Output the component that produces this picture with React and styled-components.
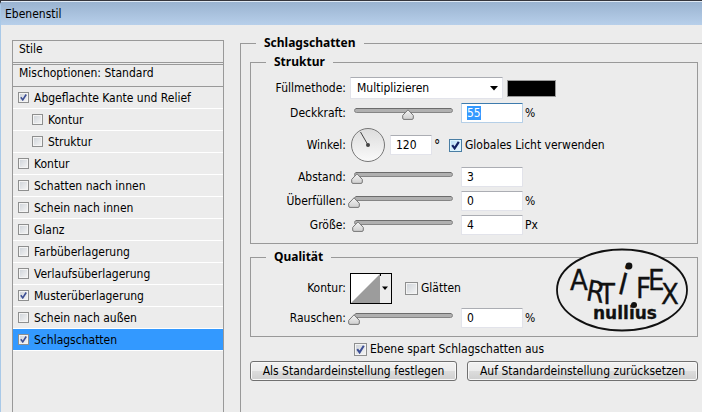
import React, { useEffect, useRef, useState } from "react";
import styled, { createGlobalStyle, css } from "styled-components";

const line = "#999";
const face = "#ececec";

const svgUrl = (markup) => `url("data:image/svg+xml,${encodeURIComponent(markup)}")`;

const tick = svgUrl(
  `<svg xmlns="http://www.w3.org/2000/svg" viewBox="0 0 11 11"><path d="M2.2 5.2 L4.6 8.4 L8.8 1.8" fill="none" stroke="#3d4f94" stroke-width="2"/></svg>`
);
const darkTick = svgUrl(
  `<svg xmlns="http://www.w3.org/2000/svg" viewBox="0 0 11 11"><path d="M2.2 5.2 L4.6 8.4 L8.8 1.8" fill="none" stroke="#122161" stroke-width="2.2"/></svg>`
);
const arrow = svgUrl(
  `<svg xmlns="http://www.w3.org/2000/svg" width="8" height="5" viewBox="0 0 8 5"><path d="M0 0H8L4 4.5Z" fill="#000"/></svg>`
);
const groove = svgUrl(
  `<svg xmlns="http://www.w3.org/2000/svg" width="99" height="5" viewBox="0 0 99 5"><rect x=".5" y=".5" width="98" height="4" rx="2" fill="#b0b0b0" stroke="#858585"/><path d="M2 .5H97" stroke="#6c6c6c"/></svg>`
);
const thumb = svgUrl(
  `<svg xmlns="http://www.w3.org/2000/svg" width="12" height="11" viewBox="0 0 12 11"><defs><linearGradient id="g" x1="0" y1="0" x2="0" y2="1"><stop offset="0" stop-color="#f4f4f4"/><stop offset="1" stop-color="#cfcfcf"/></linearGradient></defs><path d="M6 .8 L11.3 6.4 V9 Q11.3 10.4 10 10.4 H2 Q.7 10.4 .7 9 V6.4 Z" fill="url(#g)" stroke="#767676"/></svg>`
);

const GlobalStyle = createGlobalStyle`
  *, *::before, *::after { box-sizing: border-box; }
  body {
    margin: 0;
    overflow: hidden;
    background: #2b2b30;
    color: #000;
    font: 12px/16px Tahoma, "DejaVu Sans Condensed", "Noto Sans", sans-serif;
  }
  input, select, button { font: inherit; color: inherit; margin: 0; }
`;

const Dialog = styled.div`
  display: flex;
  flex-direction: column;
  min-height: 100vh;
  border-left: 1px solid #a9c9e8;
  background: ${face};
  border-top-left-radius: 5px;
`;

const TitleBar = styled.header`
  height: 25px;
  padding: 5px 4px 0;
  border-top: 1px solid #35353c;
  background: linear-gradient(#dfe9f4 0, #dfe9f4 1px, #9ab3d0 1px, #b7cfea 100%);
`;

const Title = styled.h1`
  margin: 0;
  font-size: 12px;
  line-height: 17px;
  font-weight: 400;
`;

const Body = styled.div`
  flex: 1;
  display: flex;
  gap: 16px;
  padding: 10px 0 0 11px;
`;

const Sidebar = styled.nav`
  flex: 0 0 212px;
  margin-top: 5px;
  border: 1px solid ${line};
  border-bottom: 0;
`;

const SideHead = styled.div`
  height: ${(p) => (p.$double ? 24 : 22)}px;
  padding: 0 6px;
  border-bottom: ${(p) => (p.$double ? "3px double" : "1px solid")} ${line};
`;

const StyleList = styled.ul`
  margin: 0;
  padding: 0;
  list-style: none;
`;

const StyleRow = styled.li`
  height: 22px;
  padding-left: ${(p) => (p.$nested ? 19 : 5)}px;
  border-bottom: 1px solid #fff;
  background: ${(p) => (p.$selected ? "#3399ff" : "transparent")};
`;

const CheckLabel = styled.label`
  display: flex;
  align-items: center;
  gap: 3px;
  white-space: nowrap;
`;

const SideLabel = styled(CheckLabel)`
  height: 21px;
  gap: 5px;
`;

const Check = styled.input.attrs({ type: "checkbox" })`
  appearance: none;
  flex: none;
  width: 13px;
  height: 13px;
  border: 1px solid #8e8f8f;
  background: linear-gradient(135deg, #cdd2d8, #f6f6f6);
  box-shadow: inset 0 0 0 1px #f4f4f4;
  &:checked {
    background: ${tick} center / 11px 11px no-repeat, linear-gradient(135deg, #cdd2d8, #f6f6f6);
  }
  ${(p) =>
    p.$small &&
    css`
      width: 11px;
      height: 11px;
      margin-bottom: 1px;
      &:checked {
        background: ${tick} center / 9px 9px no-repeat, linear-gradient(135deg, #cdd2d8, #f6f6f6);
      }
    `}
  ${(p) =>
    p.$hot &&
    css`
      border-color: #4a7ea4;
      box-shadow: inset 0 0 0 1px #def4fd;
      &:checked {
        background: ${darkTick} center / 11px 11px no-repeat, linear-gradient(135deg, #b5dcf5, #eef9ff);
      }
    `}
`;

const Group = styled.fieldset`
  position: relative;
  min-width: 0;
  margin: 0;
  padding: 7px 0 8px;
  border: 1px solid ${line};
`;

const Panel = styled(Group)`
  flex: 1;
  padding: 3px 4px 0 9px;
  border-right: 0;
  border-bottom: 0;
`;

const Legend = styled.legend`
  margin-left: 15px;
  padding: 0 8px;
  font-family: "Noto Sans", Tahoma, sans-serif;
  font-size: 12px;
  line-height: 16px;
  font-weight: 700;
`;

const PanelLegend = styled(Legend)`
  margin-left: 6px;
`;

const Sections = styled.div`
  display: flex;
  flex-direction: column;
  gap: 5px;
`;

const Rows = styled.div`
  display: flex;
  flex-direction: column;
  gap: 4px;
`;

const Row = styled.div`
  display: flex;
  align-items: center;
  gap: ${(p) => (p.$slider ? 2 : 4)}px;
  height: ${(p) => p.$h || 20}px;
`;

const Caption = styled.label`
  flex: 0 0 95px;
  text-align: right;
`;

const Select = styled.select`
  appearance: none;
  width: 153px;
  height: 22px;
  padding: 0 20px 0 6px;
  border: 1px solid #e2e3ea;
  border-top-color: #abadb3;
  border-radius: 0;
  background: #fff ${arrow} right 4px center no-repeat;
`;

const ColorSwatch = styled.button`
  width: 49px;
  height: 17px;
  padding: 0;
  border: 1px solid #999;
  background: #000;
`;

const Slider = styled.input.attrs({ type: "range" })`
  appearance: none;
  width: 111px;
  height: 20px;
  background: none;
  &::-webkit-slider-runnable-track {
    height: 20px;
    background: ${groove} center 5px no-repeat;
  }
  &::-webkit-slider-thumb {
    appearance: none;
    width: 12px;
    height: 11px;
    margin-top: 6px;
    background: ${thumb} center no-repeat;
  }
`;

const Field = styled.input.attrs({ type: "text" })`
  width: ${(p) => (p.$narrow ? 42 : 62)}px;
  height: 20px;
  padding: 0 5px;
  border: 1px solid #e2e3ea;
  border-top-color: #abadb3;
  border-radius: 1px;
  background: #fff;
  &:focus {
    outline: none;
    border-color: #b5cfe7;
    border-top-color: #3d7bad;
  }
  &::selection {
    background: #3399ff;
    color: #fff;
  }
`;

const Degree = styled.span`
  width: 11px;
  margin-left: -2px;
  font-size: 14px;
`;

const Dial = styled.svg`
  flex: none;
  width: 36px;
  height: 36px;
`;

const ContourButton = styled.button`
  display: flex;
  flex: none;
  padding: 0;
  border: 0;
  background: none;
  margin-right: 9px;
`;

const Logo = styled.svg`
  position: absolute;
  right: 9px;
  bottom: 4px;
  width: 132px;
  height: 84px;
`;

const Footer = styled.div`
  display: flex;
  flex-direction: column;
  gap: 4px;
  margin-top: -1px;
`;

const KnockoutLabel = styled(CheckLabel)`
  padding-left: 104px;
`;

const Buttons = styled.div`
  display: flex;
  gap: 10px;
`;

const Button = styled.button`
  flex: ${(p) => p.$grow} 0 0;
  height: 20px;
  padding: 0;
  border: 1px solid #707070;
  border-radius: 3px;
  background: linear-gradient(#f2f2f2, #ebebeb 50%, #dddddd 50%, #cfcfcf);
  box-shadow: inset 0 0 0 1px #f8f8f8;
  line-height: 17px;
  white-space: nowrap;
`;

const effects = [
  { name: "Abgeflachte Kante und Relief", on: true },
  { name: "Kontur", nested: true },
  { name: "Struktur", nested: true },
  { name: "Kontur" },
  { name: "Schatten nach innen" },
  { name: "Schein nach innen" },
  { name: "Glanz" },
  { name: "Farbüberlagerung" },
  { name: "Verlaufsüberlagerung" },
  { name: "Musterüberlagerung", on: true },
  { name: "Schein nach außen" },
  { name: "Schlagschatten", on: true, selected: true },
];

function SliderRow({ id, label, initial, position, max = 100, unit, active }) {
  const [value, setValue] = useState(initial);
  const [pos, setPos] = useState(position);
  const field = useRef(null);
  useEffect(() => {
    if (active) {
      field.current.focus();
      field.current.select();
    }
  }, [active]);
  return (
    <Row $slider>
      <Caption htmlFor={id}>{label}</Caption>
      <Slider
        aria-label={label}
        max={max}
        value={pos}
        onChange={(e) => {
          setPos(e.target.value);
          setValue(e.target.value);
        }}
      />
      <Field id={id} ref={field} value={value} onChange={(e) => setValue(e.target.value)} />
      {unit && <span>{unit}</span>}
    </Row>
  );
}

function ArtifexLogo() {
  return (
    <Logo viewBox="0 0 132 84" role="img" aria-label="Artifex nullius">
      <ellipse cx="66" cy="42" rx="65" ry="40.5" fill={face} stroke="#111" strokeWidth="1.8" />
      <text
        x="14 29 43 60 80 92 105"
        y="42 52 56 45 50 42 56"
        rotate="0 10 0 14 0 0 0"
        fill="#111"
        stroke="#111"
        strokeWidth=".3"
        fontFamily="DejaVu Sans Condensed, sans-serif"
        fontSize="29"
      >
        ART
        <tspan fontFamily="Inter, sans-serif" fontSize="40" fontWeight="300">i</tspan>
        FEX
        <tspan x="37" y="71" rotate="0" fontFamily="DejaVu Sans, sans-serif" fontWeight="700" fontSize="17">
          nullius
        </tspan>
      </text>
      <circle cx="73" cy="18" r="3.4" fill="#111" />
      <circle cx="78" cy="57" r="3" fill="#111" />
    </Logo>
  );
}

export default function App() {
  return (
    <>
      <GlobalStyle />
      <Dialog>
        <TitleBar>
          <Title>Ebenenstil</Title>
        </TitleBar>
        <Body>
          <Sidebar>
            <SideHead $double>Stile</SideHead>
            <SideHead>Mischoptionen: Standard</SideHead>
            <StyleList>
              {effects.map((e, i) => (
                <StyleRow key={i} $nested={e.nested} $selected={e.selected}>
                  <SideLabel>
                    <Check $small defaultChecked={e.on} />
                    {e.name}
                  </SideLabel>
                </StyleRow>
              ))}
            </StyleList>
          </Sidebar>

          <Panel>
            <PanelLegend>Schlagschatten</PanelLegend>
            <Sections>
              <Group>
                <Legend>Struktur</Legend>
                <Rows>
                  <Row $h={22}>
                    <Caption htmlFor="mode">Füllmethode:</Caption>
                    <Select id="mode" defaultValue="Multiplizieren">
                      <option>Multiplizieren</option>
                    </Select>
                    <ColorSwatch aria-label="Schattenfarbe" />
                  </Row>
                  <SliderRow id="opacity" label="Deckkraft:" initial="55" position={55} unit="%" active />
                  <Row $h={36}>
                    <Caption htmlFor="angle">Winkel:</Caption>
                    <Dial viewBox="0 0 36 36" aria-hidden="true">
                      <defs>
                        <linearGradient id="dial" x1="0" y1="0" x2="0" y2="1">
                          <stop offset="0" stopColor="#dcdcdc" />
                          <stop offset="1" stopColor="#fafafa" />
                        </linearGradient>
                      </defs>
                      <circle cx="18" cy="18" r="16.5" fill="url(#dial)" stroke="#777" />
                      <path d="M18 18 L10.5 5" stroke="#444" />
                      <circle cx="18" cy="18" r="2" fill="#444" />
                    </Dial>
                    <Field id="angle" $narrow defaultValue="120" />
                    <Degree>°</Degree>
                    <CheckLabel>
                      <Check $hot defaultChecked />
                      Globales Licht verwenden
                    </CheckLabel>
                  </Row>
                  <SliderRow id="distance" label="Abstand:" initial="3" position={3} />
                  <SliderRow id="spread" label="Überfüllen:" initial="0" position={0} unit="%" />
                  <SliderRow id="size" label="Größe:" initial="4" position={4} unit="Px" />
                </Rows>
              </Group>

              <Group>
                <Legend>Qualität</Legend>
                <Rows>
                  <Row $h={32}>
                    <Caption as="span">Kontur:</Caption>
                    <ContourButton aria-label="Kontur">
                      <svg width="42" height="31" viewBox="0 0 42 31">
                        <rect x=".5" y=".5" width="41" height="30" fill={face} stroke="#000" />
                        <rect x="1" y="1" width="29" height="29" fill="#fff" />
                        <path d="M1 30 L30 1 V30 Z" fill="#9c9c9c" />
                        <path d="M30.5 1 V3" stroke="#000" />
                        <path d="M32 13.5 H38 L35 17 Z" fill="#000" />
                      </svg>
                    </ContourButton>
                    <CheckLabel>
                      <Check />
                      Glätten
                    </CheckLabel>
                  </Row>
                  <SliderRow id="noise" label="Rauschen:" initial="0" position={0} unit="%" />
                </Rows>
                <ArtifexLogo />
              </Group>

              <Footer>
                <KnockoutLabel>
                  <Check defaultChecked />
                  Ebene spart Schlagschatten aus
                </KnockoutLabel>
                <Buttons>
                  <Button $grow={206}>Als Standardeinstellung festlegen</Button>
                  <Button $grow={230}>Auf Standardeinstellung zurücksetzen</Button>
                </Buttons>
              </Footer>
            </Sections>
          </Panel>
        </Body>
      </Dialog>
    </>
  );
}
